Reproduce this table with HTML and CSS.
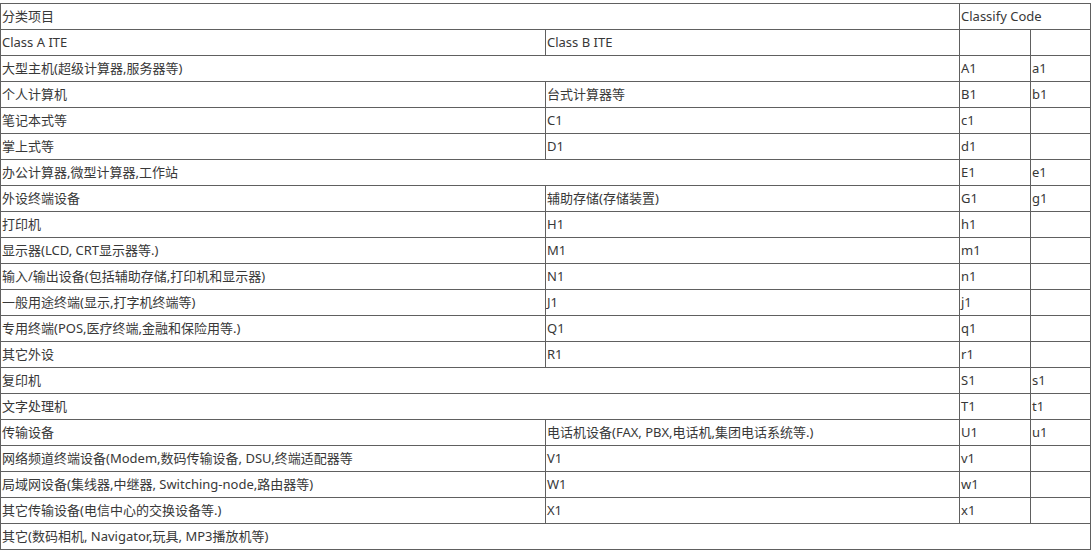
FILE: index.html
```html
<!DOCTYPE html>
<html lang="zh-CN">
<head>
<meta charset="utf-8">
<title>Classify Code</title>
<link rel="stylesheet" href="styles.css">
</head>
<body>
<table class="codes">
  <colgroup>
    <col class="c-a">
    <col class="c-b">
    <col class="c-code">
    <col class="c-sub">
  </colgroup>
  <tbody>
    <tr><td colspan="2">分类项目</td><td colspan="2">Classify Code</td></tr>
    <tr><td>Class A ITE</td><td>Class B ITE</td><td></td><td></td></tr>
    <tr><td colspan="2">大型主机(超级计算器,服务器等)</td><td>A1</td><td>a1</td></tr>
    <tr><td>个人计算机</td><td>台式计算器等</td><td>B1</td><td>b1</td></tr>
    <tr><td>笔记本式等</td><td>C1</td><td>c1</td><td></td></tr>
    <tr><td>掌上式等</td><td>D1</td><td>d1</td><td></td></tr>
    <tr><td colspan="2">办公计算器,微型计算器,工作站</td><td>E1</td><td>e1</td></tr>
    <tr><td>外设终端设备</td><td>辅助存储(存储装置)</td><td>G1</td><td>g1</td></tr>
    <tr><td>打印机</td><td>H1</td><td>h1</td><td></td></tr>
    <tr><td>显示器(LCD, CRT显示器等.)</td><td>M1</td><td>m1</td><td></td></tr>
    <tr><td>输入/输出设备(包括辅助存储,打印机和显示器)</td><td>N1</td><td>n1</td><td></td></tr>
    <tr><td>一般用途终端(显示,打字机终端等)</td><td>J1</td><td>j1</td><td></td></tr>
    <tr><td>专用终端(POS,医疗终端,金融和保险用等.)</td><td>Q1</td><td>q1</td><td></td></tr>
    <tr><td>其它外设</td><td>R1</td><td>r1</td><td></td></tr>
    <tr><td colspan="2">复印机</td><td>S1</td><td>s1</td></tr>
    <tr><td colspan="2">文字处理机</td><td>T1</td><td>t1</td></tr>
    <tr><td>传输设备</td><td>电话机设备(FAX, PBX,电话机,集团电话系统等.)</td><td>U1</td><td>u1</td></tr>
    <tr><td>网络频道终端设备(Modem,数码传输设备, DSU,终端适配器等</td><td>V1</td><td>v1</td><td></td></tr>
    <tr><td>局域网设备(集线器,中继器, Switching-node,路由器等)</td><td>W1</td><td>w1</td><td></td></tr>
    <tr><td>其它传输设备(电信中心的交换设备等.)</td><td>X1</td><td>x1</td><td></td></tr>
    <tr><td colspan="4">其它(数码相机, Navigator,玩具, MP3播放机等)</td></tr>
  </tbody>
</table>
</body>
</html>
```

FILE: styles.css
```css
html, body {
  margin: 0;
  padding: 0;
  background: #ffffff;
}

body {
  padding-top: 3px;
  font-family: "Noto Sans", "Noto Sans CJK SC", sans-serif;
  font-size: 13px;
  color: #383838;
}

.codes {
  border-collapse: collapse;
  table-layout: fixed;
  width: 1090px;
}

.c-a { width: 545px; }
.c-b { width: 414px; }
.c-code { width: 71px; }
.c-sub { width: 60px; }

.codes td {
  border: 1px solid #606060;
  height: 26px;
  padding: 0 0 2px 1px;
  box-sizing: border-box;
  vertical-align: middle;
  white-space: nowrap;
  overflow: hidden;
  line-height: 18px;
}
```
